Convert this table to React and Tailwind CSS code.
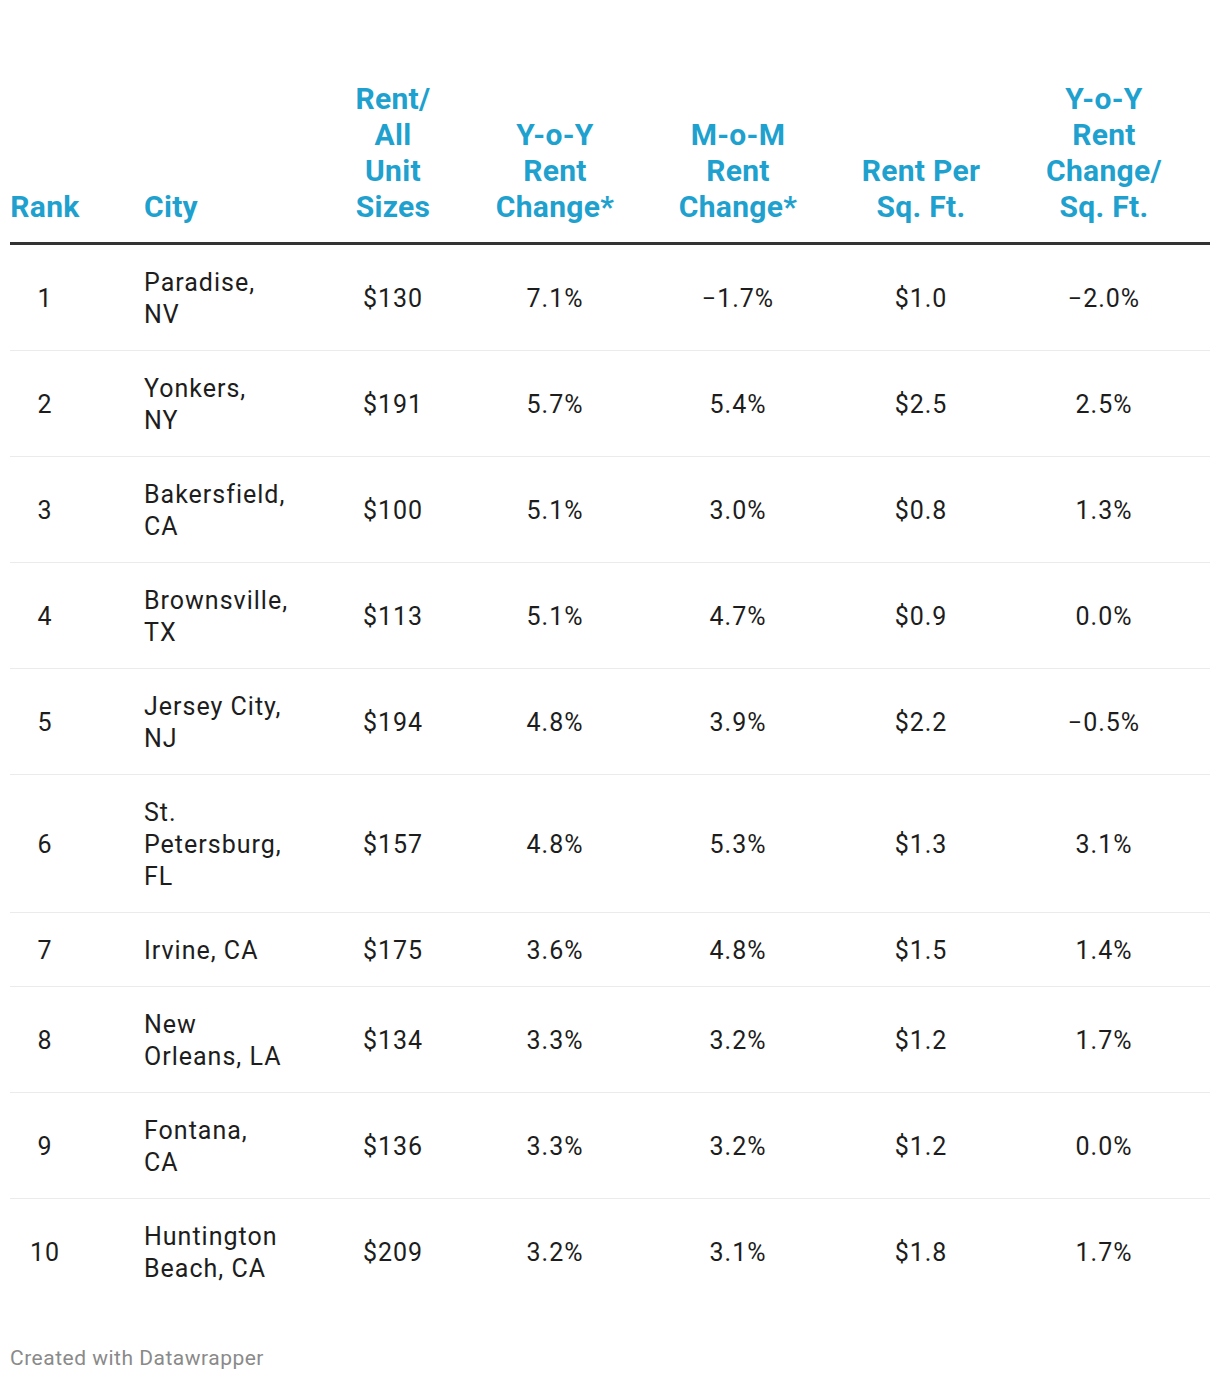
const rows = [
  { rank: 1, city: ['Paradise,', 'NV'], rent: '$130', yoy: '7.1%', mom: '−1.7%', sqft: '$1.0', yoySq: '−2.0%' },
  { rank: 2, city: ['Yonkers,', 'NY'], rent: '$191', yoy: '5.7%', mom: '5.4%', sqft: '$2.5', yoySq: '2.5%' },
  { rank: 3, city: ['Bakersfield,', 'CA'], rent: '$100', yoy: '5.1%', mom: '3.0%', sqft: '$0.8', yoySq: '1.3%' },
  { rank: 4, city: ['Brownsville,', 'TX'], rent: '$113', yoy: '5.1%', mom: '4.7%', sqft: '$0.9', yoySq: '0.0%' },
  { rank: 5, city: ['Jersey City,', 'NJ'], rent: '$194', yoy: '4.8%', mom: '3.9%', sqft: '$2.2', yoySq: '−0.5%' },
  { rank: 6, city: ['St.', 'Petersburg,', 'FL'], rent: '$157', yoy: '4.8%', mom: '5.3%', sqft: '$1.3', yoySq: '3.1%' },
  { rank: 7, city: ['Irvine, CA'], rent: '$175', yoy: '3.6%', mom: '4.8%', sqft: '$1.5', yoySq: '1.4%' },
  { rank: 8, city: ['New', 'Orleans, LA'], rent: '$134', yoy: '3.3%', mom: '3.2%', sqft: '$1.2', yoySq: '1.7%' },
  { rank: 9, city: ['Fontana,', 'CA'], rent: '$136', yoy: '3.3%', mom: '3.2%', sqft: '$1.2', yoySq: '0.0%' },
  { rank: 10, city: ['Huntington', 'Beach, CA'], rent: '$209', yoy: '3.2%', mom: '3.1%', sqft: '$1.8', yoySq: '1.7%' },
];

// column widths shared by header and body
const cols = {
  rank: 'w-[70px] shrink-0 text-center',
  city: 'w-[242px] shrink-0 pl-[64px] text-left',
  rent: 'w-[142px] shrink-0 text-center',
  yoy: 'w-[182px] shrink-0 text-center',
  mom: 'w-[184px] shrink-0 text-center',
  sqft: 'w-[182px] shrink-0 text-center',
  yoySq: 'w-[184px] shrink-0 text-center',
};

function Lines({ lines }) {
  return lines.map((l, i) => (
    <span key={i} className="block whitespace-nowrap">{l}</span>
  ));
}

export default function App() {
  return (
    <div
      className="w-[1220px] min-h-[1380px] bg-white px-[10px] pt-[81px]"
      style={{ fontFamily: 'Roboto, "Liberation Sans", sans-serif' }}
    >
      {/* header */}
      <div className="flex items-end border-b-[3px] border-[#333333] pb-[17px] text-[30px] font-bold leading-[36px] tracking-[0.3px] text-[#1ea1ce]">
        <div className={cols.rank}>Rank</div>
        <div className={cols.city}>City</div>
        <div className={cols.rent}><Lines lines={['Rent/', 'All', 'Unit', 'Sizes']} /></div>
        <div className={cols.yoy}><Lines lines={['Y-o-Y', 'Rent', 'Change*']} /></div>
        <div className={cols.mom}><Lines lines={['M-o-M', 'Rent', 'Change*']} /></div>
        <div className={cols.sqft}><Lines lines={['Rent Per', 'Sq. Ft.']} /></div>
        <div className={cols.yoySq}><Lines lines={['Y-o-Y', 'Rent', 'Change/', 'Sq. Ft.']} /></div>
      </div>

      {/* body */}
      <div className="text-[25px] leading-[32px] tracking-[1px] text-[#1d1d1d]">
        {rows.map((r, i) => (
          <div
            key={r.rank}
            className={`flex items-center pt-[22px] ${i < rows.length - 1 ? 'pb-[19px] border-b border-[#ebebeb]' : 'pb-[20px]'}`}
          >
            <div className={cols.rank}>{r.rank}</div>
            <div className={cols.city}><Lines lines={r.city} /></div>
            <div className={cols.rent}>{r.rent}</div>
            <div className={cols.yoy}>{r.yoy}</div>
            <div className={cols.mom}>{r.mom}</div>
            <div className={cols.sqft}>{r.sqft}</div>
            <div className={cols.yoySq}>{r.yoySq}</div>
          </div>
        ))}
      </div>

      <div className="mt-[41px] text-[21px] leading-[24px] tracking-[0.5px] text-[#8a8a8a]">
        Created with Datawrapper
      </div>
    </div>
  );
}
